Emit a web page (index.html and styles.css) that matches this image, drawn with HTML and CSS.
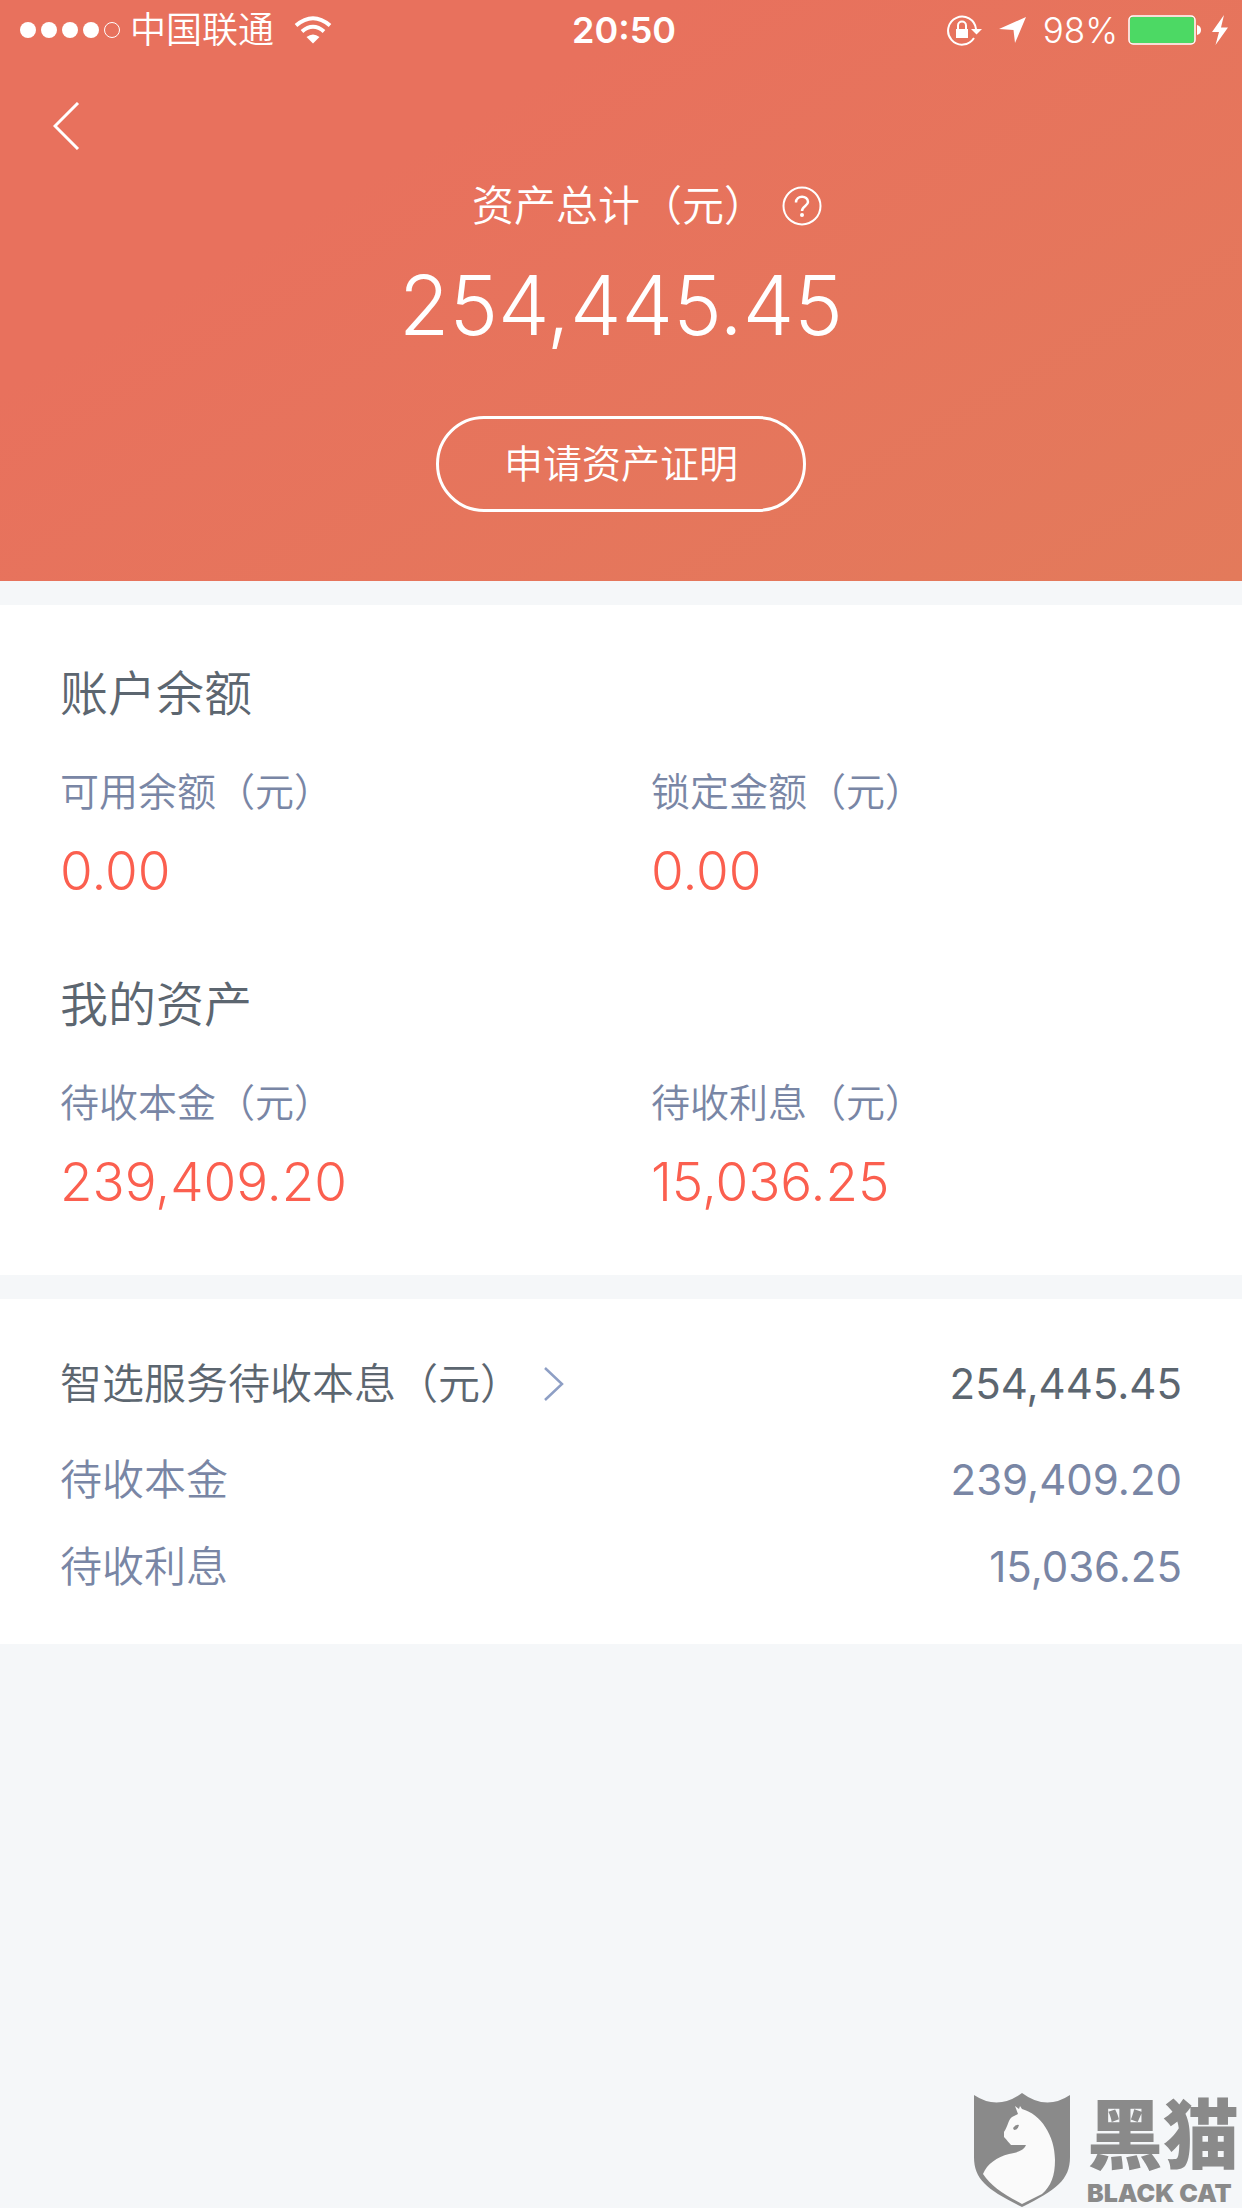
FILE: index.html
```html
<!DOCTYPE html>
<html lang="zh-CN">
<head>
    <meta charset="UTF-8">
    <meta name="viewport" content="width=device-width, initial-scale=1.0">
    <title>资产总计</title>
    <link rel="stylesheet" href="styles.css">
</head>
<body>

<header class="hero">
    <!-- Status bar -->
    <div class="status-bar">
        <div class="status-left">
            <svg class="signal" width="100" height="16" viewBox="0 0 100 16" fill="#fff">
                <circle cx="8" cy="8" r="8"/>
                <circle cx="29" cy="8" r="8"/>
                <circle cx="50" cy="8" r="8"/>
                <circle cx="71" cy="8" r="8"/>
                <circle cx="92" cy="8" r="7.5" fill="none" stroke="#fff"/>
            </svg>
            <span class="carrier">中国联通</span>
            <svg class="wifi" width="38" height="28" viewBox="0 0 38 28" fill="none" stroke="#fff" stroke-width="4">
                <path d="M2 9.500Q19-5 36 9.500"/>
                <path d="M8 15.500Q19 6 30 15.500"/>
                <path d="M19 27.500L12.500 21Q19 16 25.500 21Z" fill="#fff" stroke="none"/>
            </svg>
        </div>
        <span class="clock">20:50</span>
        <div class="status-right">
            <svg width="36" height="32" viewBox="0 0 36 32" fill="none" stroke="#fff" stroke-width="2">
                <path d="M29 15A14 14 0 1 0 27 24"/>
                <path d="M24 15h11l-5.500 5.500z" fill="#fff" stroke="none"/>
                <path d="M11 15v-3.500a4 4 0 0 1 8 0V15"/>
                <path d="M9 15h12v9H9z" fill="#fff" stroke="none"/>
            </svg>
            <svg class="location" width="28" height="28" viewBox="0 0 28 28" fill="#fff">
                <path d="M27 1L0 13l14.500 1L16 27z"/>
            </svg>
            <span class="percent">98%</span>
            <svg width="74" height="30" viewBox="0 0 74 30">
                <rect x="1" y="1" width="66" height="28" rx="4" fill="none" stroke="#fff" stroke-width="1.500"/>
                <rect x="2" y="2" width="64" height="26" rx="3" fill="#4cd964"/>
                <path d="M69 10q4 1 4 5t-4 5z" fill="#fff"/>
            </svg>
            <svg width="16" height="30" viewBox="0 0 16 30" fill="#fff">
                <path d="M12 0L0 17h7L3.500 30 16 12.500H9z"/>
            </svg>
        </div>
    </div>

    <button class="back" type="button" aria-label="返回">
        <svg width="27" height="48" viewBox="0 0 27 48" fill="none" stroke="#fff" stroke-width="3">
            <path d="M25 1L2 24l23 23"/>
        </svg>
    </button>

    <div class="total">
        <div class="total-label">
            <span>资产总计（元）</span>
            <button class="help" type="button" aria-label="说明">
                <svg width="40" height="40" viewBox="0 0 40 40" fill="none" stroke="#fff" stroke-width="2">
                    <circle cx="20" cy="20" r="18.500"/>
                    <path d="M14 16.500C14 9 26 9 26 16C26 20 20 20 20 25" stroke-width="2.500"/>
                    <circle cx="20" cy="29" r="2" fill="#fff" stroke="none"/>
                </svg>
            </button>
        </div>
        <div class="total-value">254,445.45</div>
        <button class="apply" type="button">申请资产证明</button>
    </div>
</header>

<main>
    <section class="card">
        <h2>账户余额</h2>
        <dl class="pair">
            <div>
                <dt>可用余额（元）</dt>
                <dd>0.00</dd>
            </div>
            <div>
                <dt>锁定金额（元）</dt>
                <dd>0.00</dd>
            </div>
        </dl>

        <h2>我的资产</h2>
        <dl class="pair">
            <div>
                <dt>待收本金（元）</dt>
                <dd>239,409.20</dd>
            </div>
            <div>
                <dt>待收利息（元）</dt>
                <dd>15,036.25</dd>
            </div>
        </dl>
    </section>

    <section class="card service">
        <a class="row row-main" href="#">
            <span>智选服务待收本息（元）</span>
            <svg width="20" height="34" viewBox="0 0 20 34" fill="none" stroke="#8e9fc5" stroke-width="2.500">
                <path d="M1 1l17 16L1 33"/>
            </svg>
            <span class="amount">254,445.45</span>
        </a>
        <div class="row">
            <span>待收本金</span>
            <span class="amount">239,409.20</span>
        </div>
        <div class="row">
            <span>待收利息</span>
            <span class="amount">15,036.25</span>
        </div>
    </section>
</main>

<!-- Watermark in the bottom corner -->
<div class="watermark">
    <svg width="98" height="116" viewBox="0 0 98 116">
        <path d="M1 3Q25 19 49 1Q73 19 97 3V65C97 88 83 98 49 115C15 98 1 88 1 65Z" fill="#8a8a8a"/>
        <path d="M42 14l4 3 1-3 2 3C68 22 82 44 82 68C82 84 78 94 69 102L49 112C30 102 18 94 10 82C14 72 24 65 36 62C46 60 51 58 53 53H38C36 51 34 48 31 45L31 40C35 34 35 28 39 25L45 22Z" fill="#fafafa"/>
        <path d="M40 36q3-4 6-3-1 5-5 5z" fill="#8a8a8a"/>
    </svg>
    <div class="brand">
        <span class="brand-cn">黑猫</span>
        <span class="brand-en">BLACK CAT</span>
    </div>
</div>

</body>
</html>
```
FILE: styles.css
```css
* {
    box-sizing: border-box;
}
body {
    position: relative;
    min-height: 100vh;
    margin: 0;
    font-family: Inter, "Noto Sans CJK SC", sans-serif;
    font-weight: 350;
    color: #5c6670;
    background: #f5f7f9;
}
button {
    padding: 0;
    border: none;
    background: none;
    color: inherit;
    font: inherit;
    cursor: pointer;
}
svg {
    display: block;
    flex: none;
}
h2, dl, dd {
    margin: 0;
}

/* Header */
.hero {
    padding-bottom: 69px;
    color: #fff;
    background: linear-gradient(150deg, #e8715d 30%, #e37a5b);
}
.status-bar {
    display: grid;
    grid-template-columns: 1fr auto 1fr;
    align-items: center;
    height: 60px;
    padding: 0 14px 0 20px;
    font-size: 36px;
    line-height: 60px;
}
.status-left, .status-right {
    display: flex;
    align-items: center;
}
.carrier {
    margin-left: 10px;
}
.wifi {
    margin-left: 20px;
}
.clock {
    font-weight: 600;
}
.status-right {
    justify-content: flex-end;
    gap: 10px;
}
.location {
    margin: 0 6px;
}
.percent {
    font-size: 35px;
}
.back {
    display: block;
    margin: 42px 0 0 53px;
}
.total {
    display: flex;
    flex-direction: column;
    align-items: center;
}
.total-label {
    display: flex;
    align-items: center;
    gap: 16px;
    margin: 24px 0 0 52px;
    font-size: 42px;
    line-height: 64px;
}
.total-value {
    margin-top: 16px;
    font-size: 82px;
    font-weight: 300;
    line-height: 104px;
}
.apply {
    height: 96px;
    margin-top: 58px;
    padding: 0 65px;
    border: 3px solid #fff;
    border-radius: 48px;
    font-size: 39px;
    line-height: 60px;
}

/* Cards */
.card {
    margin-top: 24px;
    padding: 54px 60px 58px;
    background: #fff;
}
h2 {
    font-size: 48px;
    font-weight: 350;
    line-height: 70px;
}
.pair {
    display: grid;
    grid-template-columns: 1fr 1fr;
    gap: 60px;
}
.pair + h2 {
    margin-top: 64px;
}
dt {
    margin-top: 33px;
    font-size: 39px;
    line-height: 60px;
    color: #7986a5;
}
dd {
    margin-top: 14px;
    font-size: 53px;
    font-weight: 300;
    line-height: 70px;
    color: #fb5f4f;
}
.service {
    padding: 33px 60px 34px;
}
.row {
    display: flex;
    align-items: center;
    height: 87px;
    font-size: 42px;
    line-height: 60px;
    color: #7986a5;
    text-decoration: none;
}
.row-main {
    gap: 22px;
    height: 104px;
    color: #5c6670;
}
.amount {
    margin-left: auto;
    font-weight: 400;
}

/* Watermark */
.watermark {
    position: absolute;
    right: 3px;
    bottom: 0;
    display: flex;
    gap: 16px;
    color: #8a8a8a;
}
.brand {
    display: flex;
    flex-direction: column;
}
.brand-cn {
    font-size: 76px;
    font-weight: 900;
    line-height: 86px;
}
.brand-en {
    font-size: 25px;
    font-weight: 900;
    line-height: 30px;
}
```
